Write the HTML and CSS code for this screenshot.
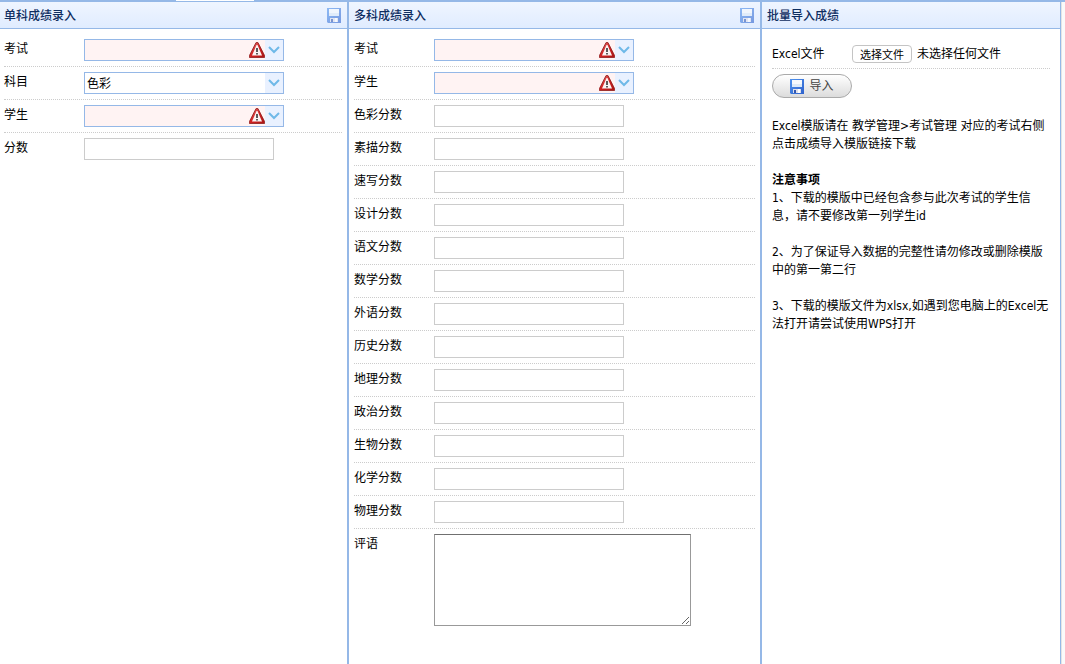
FILE: index.html
```html
<!DOCTYPE html>
<html lang="zh-CN">
<head>
<meta charset="utf-8">
<title>成绩录入</title>
<link rel="stylesheet" href="styles.css">
</head>
<body>
<svg class="defs" aria-hidden="true">
  <defs>
    <linearGradient id="red" x1="0" y1="0" x2="1" y2="1"><stop offset="0" stop-color="#e88a8a"/><stop offset=".45" stop-color="#d42424"/><stop offset="1" stop-color="#a81414"/></linearGradient>
    <linearGradient id="blue" x1="0" y1="0" x2="1" y2="1"><stop offset="0" stop-color="#4f93ee"/><stop offset="1" stop-color="#2f62cc"/></linearGradient>
  </defs>
  <symbol id="warn" viewBox="0 0 16 16">
    <path d="M7 .6h2L15.600 13.600V15.500H.4V13.600Z" fill="url(#red)" stroke="#8e1c1c" stroke-width=".8" stroke-linejoin="round"/>
    <path d="M7.500 3h1L13 13.500H3Z" fill="#fbf3f3"/>
    <path d="M7.200 6h1.600v4H7.200zM7.200 11h1.600v1.500H7.200z" fill="#333"/>
  </symbol>
  <symbol id="disk" viewBox="0 0 14 15">
    <path d="M0 0h14v15H1L0 14Z" fill="url(#blue)"/>
    <path d="M2 1h10v7H2z" fill="#f6fafd"/>
    <path d="M2 5h10v3H2z" fill="#dceaf8"/>
    <path d="M3 10h8v4H3z" fill="#dfe0ea"/>
    <path d="M4 11h2v3H4z" fill="#3458b0"/>
    <path d="M8 10h2v4H8z" fill="#fff"/>
  </symbol>
</svg>
<main class="layout">
  <section class="panel single">
    <header class="panel-head"><h2>单科成绩录入</h2><button class="save" aria-label="保存"><svg><use href="#disk"/></svg></button></header>
    <form class="rows">
      <div class="row"><label for="s1">考试</label><div class="combo invalid"><input id="s1"><svg class="warn"><use href="#warn"/></svg><button type="button" class="arrow" aria-label="展开"><svg viewBox="0 0 12 8"><path d="M1 1 6 6 11 1"/></svg></button></div></div>
      <div class="row"><label for="s2">科目</label><div class="combo"><input id="s2" value="色彩"><button type="button" class="arrow" aria-label="展开"><svg viewBox="0 0 12 8"><path d="M1 1 6 6 11 1"/></svg></button></div></div>
      <div class="row"><label for="s3">学生</label><div class="combo invalid"><input id="s3"><svg class="warn"><use href="#warn"/></svg><button type="button" class="arrow" aria-label="展开"><svg viewBox="0 0 12 8"><path d="M1 1 6 6 11 1"/></svg></button></div></div>
      <div class="row"><label for="s4">分数</label><input class="text" id="s4"></div>
    </form>
  </section>
  <section class="panel middle">
    <header class="panel-head"><h2>多科成绩录入</h2><button class="save" aria-label="保存"><svg><use href="#disk"/></svg></button></header>
    <form class="rows">
      <div class="row"><label for="m1">考试</label><div class="combo invalid"><input id="m1"><svg class="warn"><use href="#warn"/></svg><button type="button" class="arrow" aria-label="展开"><svg viewBox="0 0 12 8"><path d="M1 1 6 6 11 1"/></svg></button></div></div>
      <div class="row"><label for="m2">学生</label><div class="combo invalid"><input id="m2"><svg class="warn"><use href="#warn"/></svg><button type="button" class="arrow" aria-label="展开"><svg viewBox="0 0 12 8"><path d="M1 1 6 6 11 1"/></svg></button></div></div>
      <div class="row"><label for="m3">色彩分数</label><input class="text" id="m3"></div>
      <div class="row"><label for="m4">素描分数</label><input class="text" id="m4"></div>
      <div class="row"><label for="m5">速写分数</label><input class="text" id="m5"></div>
      <div class="row"><label for="m6">设计分数</label><input class="text" id="m6"></div>
      <div class="row"><label for="m7">语文分数</label><input class="text" id="m7"></div>
      <div class="row"><label for="m8">数学分数</label><input class="text" id="m8"></div>
      <div class="row"><label for="m9">外语分数</label><input class="text" id="m9"></div>
      <div class="row"><label for="m10">历史分数</label><input class="text" id="m10"></div>
      <div class="row"><label for="m11">地理分数</label><input class="text" id="m11"></div>
      <div class="row"><label for="m12">政治分数</label><input class="text" id="m12"></div>
      <div class="row"><label for="m13">生物分数</label><input class="text" id="m13"></div>
      <div class="row"><label for="m14">化学分数</label><input class="text" id="m14"></div>
      <div class="row"><label for="m15">物理分数</label><input class="text" id="m15"></div>
      <div class="row"><label for="m16">评语</label><textarea id="m16"></textarea></div>
    </form>
  </section>
  <section class="panel import">
    <header class="panel-head"><h2>批量导入成绩</h2></header>
    <form class="import-body">
      <div class="file-row"><label for="file">Excel文件</label><button type="button" class="choose" id="file">选择文件</button><span class="file-name">未选择任何文件</span></div>
      <button type="button" class="submit"><svg><use href="#disk"/></svg>导入</button>
      <div class="notes">
        <p>Excel模版请在 教学管理&gt;考试管理 对应的考试右侧点击成绩导入模版链接下载</p>
        <div><h3>注意事项</h3><p>1、下载的模版中已经包含参与此次考试的学生信息，请不要修改第一列学生id</p></div>
        <p>2、为了保证导入数据的完整性请勿修改或删除模版中的第一第二行</p>
        <p>3、下载的模版文件为xlsx,如遇到您电脑上的Excel无法打开请尝试使用WPS打开</p>
      </div>
    </form>
  </section>
  <div class="gutter"></div>
</main>
<div class="tab"></div>
</body>
</html>
```
FILE: styles.css
```css
* { box-sizing: border-box; }
body {
  margin: 0;
  background: #fff;
  color: #000;
  font: 12px/18px Tahoma, "DejaVu Sans Condensed", "Noto Sans CJK SC", sans-serif;
}
button, input, textarea { font: inherit; color: inherit; margin: 0; }
.defs { position: absolute; width: 0; height: 0; }
.layout {
  display: grid;
  grid-template-columns: 349fr 413fr 299fr 4px;
  min-height: 100vh;
  border-top: 2px solid #95b8e7;
}
.tab {
  position: absolute;
  top: 0;
  left: 176px;
  width: 78px;
  height: 1px;
  background: #fff;
}
.panel { border-right: 2px solid #95b8e7; }
.import { border-right-width: 1px; }
.gutter { background: #fafafa; border-left: 1px solid #e4e4e4; }
.panel-head {
  display: flex;
  align-items: center;
  justify-content: space-between;
  height: 27px;
  padding: 0 6px 0 5px;
  background: linear-gradient(#eff5ff, #e0ecff);
  border-bottom: 1px solid #95b8e7;
}
.single .panel-head { padding-left: 4px; }
h2 { margin: 0; padding-top: 2px; font-size: 12px; font-weight: 500; color: #0e2d5f; }
.save { padding: 0; border: 0; background: none; opacity: .6; }
.save svg { display: block; width: 14px; height: 15px; }
.rows { padding: 5px 5px 0 4px; }
.middle .rows { padding-left: 5px; }
.row {
  display: flex;
  align-items: flex-start;
  padding: 5px 0;
  border-bottom: 1px dotted #ccc;
}
.row:last-child { border: 0; }
.row label { width: 80px; line-height: 20px; }
.text { width: 190px; height: 22px; padding: 0 4px; border: 1px solid #ccc; }
.combo { display: flex; width: 200px; height: 22px; border: 1px solid #95b8e7; background: #fff; }
.combo input { flex: 1; min-width: 0; padding: 2px 2px 0; border: 0; background: transparent; outline: 0; }
.invalid { background: #fff3f3; }
.warn { width: 16px; height: 16px; margin-top: 2px; }
.arrow {
  display: flex;
  align-items: center;
  justify-content: center;
  width: 18px;
  padding: 0;
  border: 0;
  background: #e9f1ff;
}
.arrow svg { width: 12px; height: 8px; fill: none; stroke: #6fb9e8; stroke-width: 2; }
textarea { width: 257px; height: 92px; border: 1px solid #999; border-top-color: #707070; resize: both; }
.import-body { padding: 10px; }
.file-row { display: flex; align-items: center; height: 30px; border-bottom: 1px dotted #ccc; }
.file-row label { width: 80px; }
.choose {
  height: 18px;
  padding: 2px 7px 0;
  border: 1px solid #c4c4c4;
  border-radius: 4px;
  background: #fff;
  font-size: 11px;
  line-height: 16px;
}
.file-name { margin-left: 5px; }
.submit {
  display: flex;
  align-items: center;
  justify-content: center;
  gap: 5px;
  width: 80px;
  height: 24px;
  margin-top: 5px;
  padding: 0;
  border: 1px solid #aaa;
  border-radius: 12px;
  background: linear-gradient(#fff, #dcdcdc);
  color: #444;
  line-height: 20px;
}
.submit svg { width: 14px; height: 15px; }
.notes { display: grid; gap: 18px; margin-top: 19px; }
.notes p, .notes h3 { margin: 0; font-size: 12px; }
```
